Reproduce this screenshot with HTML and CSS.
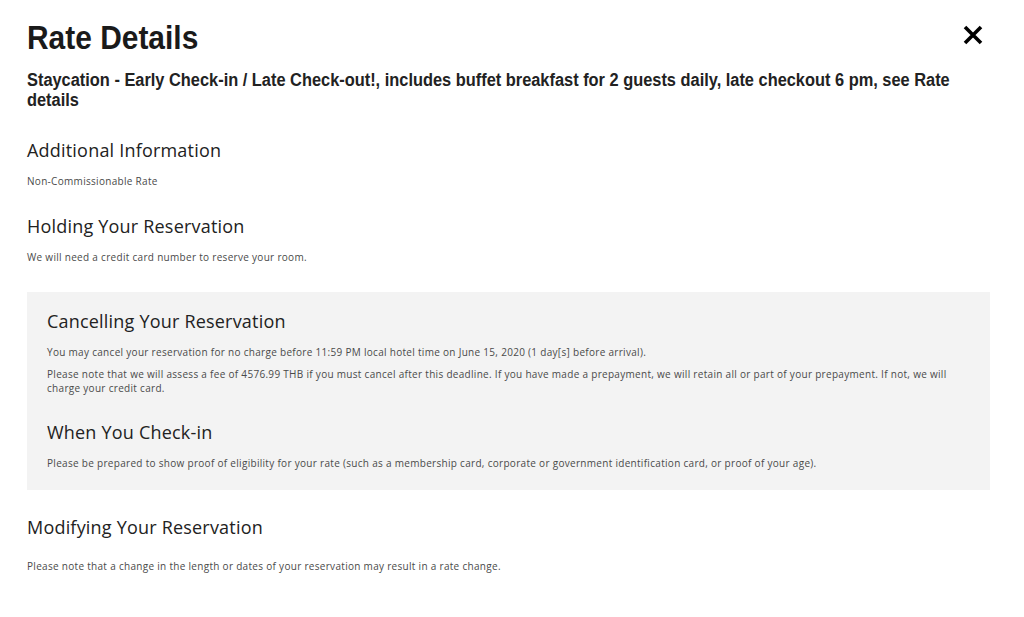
FILE: index.html
```html
<!DOCTYPE html>
<html lang="en">
<head>
<meta charset="utf-8">
<title>Rate Details</title>
<link rel="stylesheet" href="styles.css">
</head>
<body>
<div class="modal">
  <div class="modal-header">
    <h1 class="title">Rate Details</h1>
    <button class="close" aria-label="Close">
      <svg width="20" height="20" viewBox="0 0 20 20"><path d="M2 2 L18 18 M18 2 L2 18" stroke="#000" stroke-width="3.6" stroke-linecap="butt"/></svg>
    </button>
  </div>
  <div class="subtitle-wrap">
    <p class="subtitle">Staycation - Early Check-in / Late Check-out!, includes buffet breakfast for 2 guests daily, late checkout 6 pm, see Rate details</p>
  </div>

  <section class="section first">
    <h2 class="heading">Additional Information</h2>
    <p class="text">Non-Commissionable Rate</p>
  </section>

  <section class="section">
    <h2 class="heading">Holding Your Reservation</h2>
    <p class="text">We will need a credit card number to reserve your room.</p>
  </section>

  <div class="panel">
    <section class="section">
      <h2 class="heading">Cancelling Your Reservation</h2>
      <p class="text">You may cancel your reservation for no charge before 11:59 PM local hotel time on June 15, 2020 (1 day[s] before arrival).</p>
      <p class="text tight">Please note that we will assess a fee of 4576.99 THB if you must cancel after this deadline. If you have made a prepayment, we will retain all or part of your prepayment. If not, we will charge your credit card.</p>
    </section>
    <section class="section">
      <h2 class="heading">When You Check-in</h2>
      <p class="text">Please be prepared to show proof of eligibility for your rate (such as a membership card, corporate or government identification card, or proof of your age).</p>
    </section>
  </div>

  <section class="section modify">
    <h2 class="heading">Modifying Your Reservation</h2>
    <p class="text">Please note that a change in the length or dates of your reservation may result in a rate change.</p>
  </section>
</div>
</body>
</html>
```
FILE: styles.css
```css
* { box-sizing: border-box; }
html, body { margin: 0; padding: 0; background: #fff; }
body { font-family: "Open Sans", Lato, sans-serif; color: #333; }

.modal {
  width: 1024px;
  padding: 17px 34px 0 27px;
}

.modal-header {
  display: flex;
  justify-content: space-between;
  align-items: flex-start;
}

.title {
  margin: 0;
  font-family: "Liberation Sans", Arial, sans-serif;
  font-weight: 700;
  font-size: 34px;
  line-height: 40px;
  color: #1a1a1a;
  transform: scaleX(0.88);
  transform-origin: left center;
  white-space: nowrap;
}

.close {
  margin: 8px 7px 0 0;
  padding: 0;
  border: 0;
  background: none;
  width: 20px;
  height: 20px;
  display: block;
}
.close svg { display: block; }

.subtitle-wrap { margin-top: 13px; }
.subtitle {
  margin: 0;
  width: calc(100% / 0.91);
  font-family: "Liberation Sans", Arial, sans-serif;
  font-weight: 700;
  font-size: 18px;
  line-height: 20px;
  color: #222;
  transform: scaleX(0.91);
  transform-origin: left top;
}

.section { margin-top: 27px; }
.section.first { margin-top: 29px; }
.heading {
  margin: 0;
  font-weight: 400;
  font-size: 18px;
  line-height: 22px;
  letter-spacing: 0.2px;
  color: #222;
}
.text {
  margin: 13px 0 0;
  font-size: 10px;
  line-height: 14px;
  letter-spacing: 0.3px;
  color: #4a4a4a;
}
.text.tight { margin-top: 8px; }

.panel {
  margin-top: 28px;
  background: #f3f3f3;
  padding: 18px 20px 20px;
}
.panel .section:first-child { margin-top: 0; }
.panel .section { margin-top: 26px; }

.modify { margin-top: 26px; }
.modify .text { margin-top: 21px; }
```
